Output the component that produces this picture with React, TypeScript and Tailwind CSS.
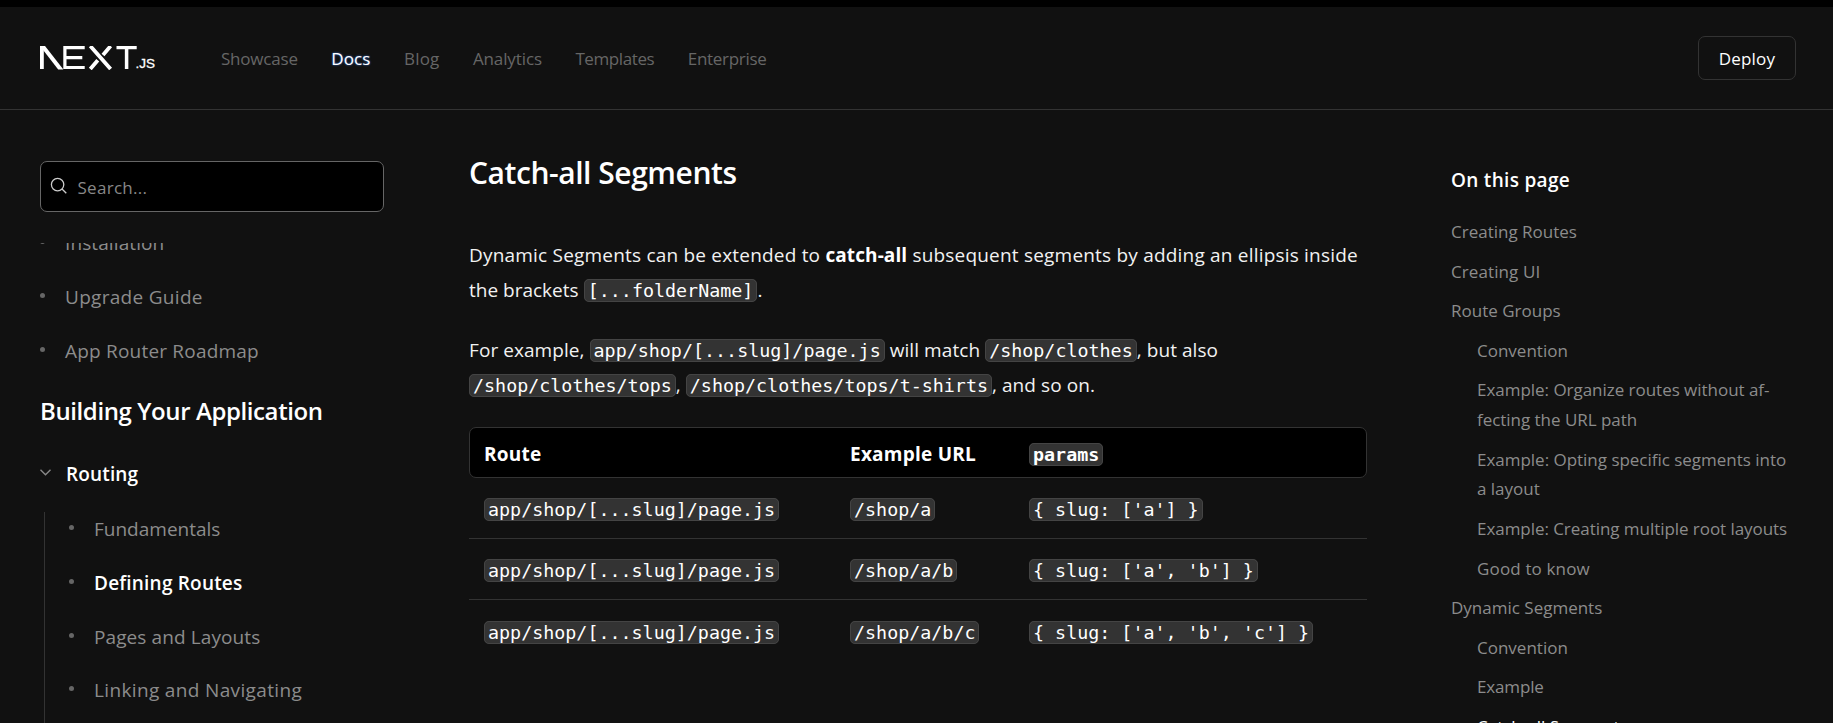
import type { ReactNode } from "react";
import clsx from "clsx";

function Logo() {
  return (
    <div className="flex w-[116px] items-end">
      <svg width="97" height="24" viewBox="0 0 97 24" fill="none" stroke="#fff" aria-label="Next.js">
        <path d="M1.9 0V23" strokeWidth="3.8" />
        <path d="M0 0H5L23.4 23.6H18.2Z" fill="#fff" stroke="none" />
        <path d="M24.9 0V23M44.7 1.6H24.9M42.3 11.7H24.9M44.7 21.5H24.9" strokeWidth="3.2" />
        <path d="M50.3 0L70.6 23M70.6 0L63 9M57.8 14.2L50.3 23" strokeWidth="3.8" />
        <path d="M76.5 1.6H96.7M86.6 0V23" strokeWidth="3.5" />
      </svg>
      <span className="-ml-[1.5px] h-[24px] pt-[9.5px] text-[13.5px] leading-[16px] font-medium text-white font-['Liberation_Sans',sans-serif] [-webkit-text-stroke:0.3px_#fff]">
        .JS
      </span>
    </div>
  );
}

const nav = [
  { label: "Showcase", cls: "tracking-[-0.2px]" },
  { label: "Docs", cls: "tracking-[0.1px] text-white [text-shadow:0_0_2px_#3b82f6]" },
  { label: "Blog", cls: "tracking-[0.17px]" },
  { label: "Analytics", cls: "tracking-[-0.12px]" },
  { label: "Templates", cls: "tracking-[-0.4px]" },
  { label: "Enterprise", cls: "tracking-[-0.3px]" },
];

function Header() {
  return (
    <header className="flex h-[103px] shrink-0 items-center border-b border-[#333] pr-[37px] pl-10 text-[17px]">
      <Logo />
      <nav className="mt-0.5 ml-[65px] flex gap-[33.5px] text-[#666]">
        {nav.map((n) => (
          <a key={n.label} className={n.cls}>
            {n.label}
          </a>
        ))}
      </nav>
      <button className="ml-auto h-11 w-[98px] rounded-[7px] border border-[#333] pt-0.5 tracking-[0.2px] text-white">
        Deploy
      </button>
    </header>
  );
}

function DocLink({ children, active, className }: { children: ReactNode; active?: boolean; className?: string }) {
  return (
    <li className={clsx("flex pb-5 leading-[33.75px]", active ? "font-semibold text-white" : "text-[#8c8c8c]", className)}>
      <span className="mt-[12px] mr-[20px] size-[5px] rounded-full bg-[#666]" />
      {children}
    </li>
  );
}

function Sidebar() {
  return (
    <aside className="flex w-[344px] shrink-0 flex-col pt-[51px] text-[19px]">
      <div className="flex h-[51px] shrink-0 items-center rounded-[7px] border border-[#666] bg-black pl-[9px]">
        <svg width="18" height="18" viewBox="0 0 18 18" fill="none" stroke="#ccc" strokeWidth="1.3" className="-mt-px">
          <circle cx="7.6" cy="7.6" r="6.2" />
          <path d="M12 12L16.3 16.3" />
        </svg>
        <span className="mt-0.5 ml-[9.5px] text-[17px] tracking-[0.28px] text-[#888]">Search...</span>
      </div>
      <div className="mt-[31px] min-h-0 grow overflow-hidden">
        <ul className="-mt-4">
          <DocLink className="tracking-[0.1px]">Installation</DocLink>
          <DocLink className="tracking-[0.3px]">Upgrade Guide</DocLink>
          <DocLink className="tracking-[0.2px]">App Router Roadmap</DocLink>
        </ul>
        <h3 className="mt-[4.5px] text-[24px] leading-9 font-semibold tracking-[-0.4px] text-white">
          Building Your Application
        </h3>
        <div className="mt-[29.5px] flex pb-5 leading-[33.75px] font-semibold tracking-[0.15px] text-white">
          <svg width="11" height="7" viewBox="0 0 11 7" fill="none" stroke="#888" strokeWidth="1.4" className="mt-[11px] mr-[15px]">
            <path d="M0.5 0.7L5.5 5.7L10.5 0.7" />
          </svg>
          Routing
        </div>
        <ul className="ml-1 border-l border-[#333] pt-px pl-6">
          <DocLink>Fundamentals</DocLink>
          <DocLink active className="tracking-[0.2px]">Defining Routes</DocLink>
          <DocLink className="tracking-[0.1px]">Pages and Layouts</DocLink>
          <DocLink className="tracking-[0.35px]">Linking and Navigating</DocLink>
        </ul>
        <div className="ml-1 h-10 border-l border-[#333]" />
      </div>
    </aside>
  );
}

function Code({ children }: { children: ReactNode }) {
  return (
    <code className="rounded-[5px] border border-[#444] bg-[#333] px-[3px] text-[18.35px] leading-none tracking-normal whitespace-pre text-white font-['DejaVu_Sans_Mono',monospace]">
      {children}
    </code>
  );
}

const routes = [
  { url: "/shop/a", params: "{ slug: ['a'] }" },
  { url: "/shop/a/b", params: "{ slug: ['a', 'b'] }" },
  { url: "/shop/a/b/c", params: "{ slug: ['a', 'b', 'c'] }" },
];

function Content() {
  return (
    <main className="w-[898px] shrink-0 pt-[43px] text-[19px] leading-[34.5px] text-[#f2f2f2]">
      <h2 className="text-[30px] leading-10 font-semibold tracking-[-0.45px] text-white">Catch-all Segments</h2>
      <p className="mt-[45px] tracking-[0.2px] whitespace-nowrap">
        Dynamic Segments can be extended to{" "}
        <strong className="font-bold tracking-[0.1px] text-white">catch-all</strong> subsequent segments by adding an
        ellipsis inside
        <br />
        <span className="tracking-normal">the brackets</span> <Code>[...folderName]</Code>.
      </p>
      <p className="mt-[26px] tracking-[0.07px] whitespace-nowrap">
        For example, <Code>app/shop/[...slug]/page.js</Code> will match <Code>/shop/clothes</Code>, but also
        <br />
        <Code>/shop/clothes/tops</Code>, <Code>/shop/clothes/tops/t-shirts</Code>, and so on.
      </p>
      <div className="mt-[25px]">
        <div className="grid h-[51px] grid-cols-[366px_179px_1fr] items-center rounded-[7px] border border-[#333] bg-black px-[14px] pt-[3px] font-bold tracking-[0.24px] text-white">
          <span>Route</span>
          <span>Example URL</span>
          <span>
            <Code>params</Code>
          </span>
        </div>
        {routes.map((r) => (
          <div
            key={r.url}
            className="grid h-[61px] grid-cols-[366px_179px_1fr] items-center border-b border-[#333] px-[15px] pt-[3px] last:h-[62px] last:border-0"
          >
            <span>
              <Code>app/shop/[...slug]/page.js</Code>
            </span>
            <span>
              <Code>{r.url}</Code>
            </span>
            <span>
              <Code>{r.params}</Code>
            </span>
          </div>
        ))}
      </div>
    </main>
  );
}

const toc: { lines: string[]; nested?: boolean; cls?: string }[] = [
  { lines: ["Creating Routes"] },
  { lines: ["Creating UI"], cls: "tracking-[0.1px]" },
  { lines: ["Route Groups"] },
  { lines: ["Convention"], nested: true },
  { lines: ["Example: Organize routes without af-", "fecting the URL path"], nested: true, cls: "tracking-[-0.03px]" },
  { lines: ["Example: Opting specific segments into", "a layout"], nested: true, cls: "tracking-[-0.02px]" },
  { lines: ["Example: Creating multiple root layouts"], nested: true, cls: "tracking-[-0.05px]" },
  { lines: ["Good to know"], nested: true, cls: "tracking-[0.15px]" },
  { lines: ["Dynamic Segments"] },
  { lines: ["Convention"], nested: true },
  { lines: ["Example"], nested: true, cls: "tracking-[-0.15px]" },
  { lines: ["Catch-all Segments"], nested: true, cls: "text-white" },
];

function Toc() {
  return (
    <aside className="ml-[84px] w-[345px] shrink-0 pt-[55px]">
      <h4 className="text-[19px] leading-[30px] font-semibold tracking-[0.3px] text-white">On this page</h4>
      <ul className="mt-[22px] flex flex-col gap-[9.9px] text-[17px] leading-[29.7px] text-[#8c8c8c]">
        {toc.map((t, i) => (
          <li key={i} className={clsx("whitespace-nowrap", t.nested && "pl-[26px]", t.cls)}>
            {t.lines.map((l) => (
              <div key={l}>{l}</div>
            ))}
          </li>
        ))}
      </ul>
    </aside>
  );
}

export default function App() {
  return (
    <div className="flex h-[723px] w-[1833px] flex-col overflow-hidden border-t-[7px] border-black bg-[#111] font-['Open_Sans','Noto_Sans',sans-serif]">
      <Header />
      <div className="flex min-h-0 grow overflow-hidden pl-10">
        <Sidebar />
        <div className="w-[85px] shrink-0" />
        <Content />
        <Toc />
      </div>
    </div>
  );
}
